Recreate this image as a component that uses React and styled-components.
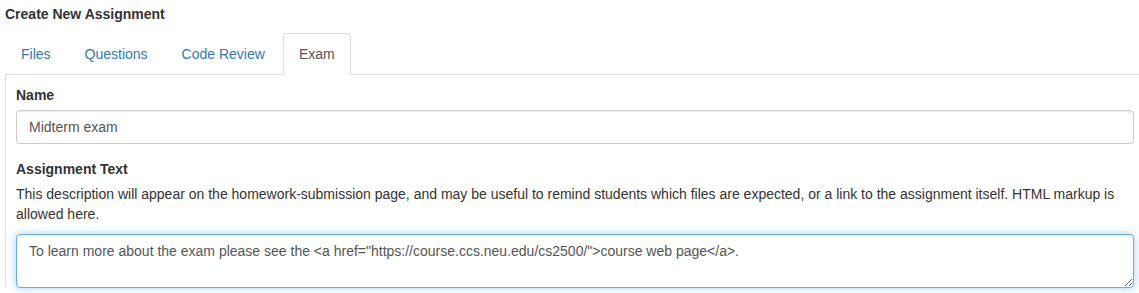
import React, { useEffect, useRef } from "react";
import styled, { createGlobalStyle } from "styled-components";

const Global = createGlobalStyle`
  html, body { margin: 0; padding: 0; overflow: hidden; background: #fff; }
  body {
    font-family: "Liberation Sans", Arial, Helvetica, sans-serif;
    font-size: 14px;
    line-height: 20px;
    color: #333;
  }
  * { box-sizing: border-box; }
`;

const Page = styled.div`
  width: 1145px;
  padding: 4px 0 0 5px;
`;

const Title = styled.h4`
  margin: 0 0 9px;
  font-size: 14px;
  line-height: 20px;
  font-weight: bold;
  color: #333;
`;

const Tabs = styled.ul`
  display: flex;
  list-style: none;
  margin: 0;
  padding: 0;
  border-bottom: 1px solid #ddd;
`;

const TabItem = styled.li`
  margin-bottom: -1px;
`;

const TabLink = styled.a`
  display: block;
  margin-right: 2px;
  padding: 10px 15px;
  line-height: 20px;
  border: 1px solid ${(p) => (p.$active ? "#ddd" : "transparent")};
  border-bottom-color: ${(p) => (p.$active ? "transparent" : "transparent")};
  border-radius: 4px 4px 0 0;
  background: ${(p) => (p.$active ? "#fff" : "transparent")};
  color: ${(p) => (p.$active ? "#555" : "#337ab7")};
  text-decoration: none;
  cursor: pointer;
`;

const Panel = styled.div`
  border-left: 1px solid #ddd;
  border-right: 1px solid #ddd;
  padding: 10px 10px 0;
`;

const FormGroup = styled.div`
  margin-bottom: 15px;
`;

const Label = styled.label`
  display: block;
  margin-bottom: 5px;
  font-weight: bold;
  color: #333;
`;

const Input = styled.input`
  display: block;
  width: 100%;
  height: 34px;
  padding: 6px 12px;
  font-family: inherit;
  font-size: 14px;
  line-height: 20px;
  color: #555;
  background: #fff;
  border: 1px solid #ccc;
  border-radius: 4px;
  box-shadow: inset 0 1px 1px rgba(0, 0, 0, 0.075);
  outline: none;
`;

const Help = styled.p`
  margin: 0 0 10px;
  color: #333;
`;

const TextArea = styled.textarea`
  display: block;
  width: 100%;
  height: 54px;
  padding: 6px 12px;
  font-family: inherit;
  font-size: 14px;
  line-height: 20px;
  color: #555;
  background: #fff;
  border: 1px solid #66afe9;
  border-radius: 4px;
  box-shadow: inset 0 1px 1px rgba(0, 0, 0, 0.075),
    0 0 8px rgba(102, 175, 233, 0.6);
  outline: none;
  resize: vertical;
`;

const tabs = ["Files", "Questions", "Code Review", "Exam"];
const text =
  'To learn more about the exam please see the <a href="https://course.ccs.neu.edu/cs2500/">course web page</a>.';

export default function App() {
  const ref = useRef(null);
  useEffect(() => {
    const el = ref.current;
    if (el) {
      el.focus();
      el.setSelectionRange(el.value.length, el.value.length);
    }
  }, []);
  return (
    <Page>
      <Global />
      <Title>Create New Assignment</Title>
      <Tabs>
        {tabs.map((t) => (
          <TabItem key={t}>
            <TabLink $active={t === "Exam"}>{t}</TabLink>
          </TabItem>
        ))}
      </Tabs>
      <Panel>
        <FormGroup>
          <Label>Name</Label>
          <Input defaultValue="Midterm exam" />
        </FormGroup>
        <FormGroup>
          <Label>Assignment Text</Label>
          <Help>
            This description will appear on the homework-submission page, and
            may be useful to remind students which files are expected, or a
            link to the assignment itself. HTML markup is allowed here.
          </Help>
          <TextArea ref={ref} rows={2} defaultValue={text} />
        </FormGroup>
      </Panel>
    </Page>
  );
}
